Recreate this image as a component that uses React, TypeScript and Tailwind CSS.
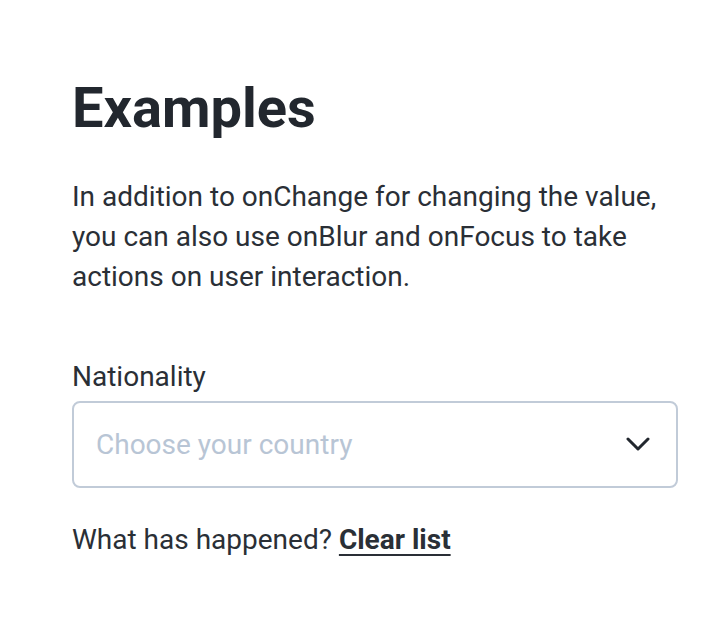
import { useState } from 'react';

// Examples section with a country select
const App = () => {
  const [country, setCountry] = useState('');

  return (
    <div className="min-h-screen bg-white text-[#22272e] font-['Roboto',sans-serif]">
      <div className="pl-[72px] pr-[40px] pt-[76px]">
        {/* Heading */}
        <h1 className="text-[56px] font-bold leading-[64px]">Examples</h1>

        {/* Intro text */}
        <p className="mt-[37px] text-[28px] leading-[40px] text-[#2a2f36]">
          In addition to onChange for changing the value, you can also use onBlur and onFocus to take actions on user interaction.
        </p>

        {/* Nationality select */}
        <label className="block mt-[60px] text-[28px] leading-[40px] text-[#2a2f36]">Nationality</label>
        <div className="relative mt-[4px] w-full">
          <select
            value={country}
            onChange={(e) => setCountry(e.target.value)}
            className="w-full h-[87px] appearance-none rounded-[8px] border-2 border-[#c1cbd8] bg-white pl-[22px] pr-16 text-[28px] text-[#b8c5d5] outline-none"
          >
            <option value="" disabled>Choose your country</option>
            <option value="nl">Netherlands</option>
            <option value="de">Germany</option>
          </select>
          <svg
            className="pointer-events-none absolute right-[28px] top-[35px]"
            width="24"
            height="16"
            viewBox="0 0 24 16"
            fill="none"
            stroke="#22272e"
            strokeWidth="3"
            strokeLinecap="round"
            strokeLinejoin="round"
          >
            <path d="M2 3l10 10 10-10" />
          </svg>
        </div>

        {/* Events list */}
        <p className="mt-[32px] text-[28px] leading-[40px] text-[#2a2f36]">
          What has happened?{' '}
          <button className="font-bold underline underline-offset-[5px] decoration-2">Clear list</button>
        </p>
      </div>
    </div>
  );
};

export default App;
